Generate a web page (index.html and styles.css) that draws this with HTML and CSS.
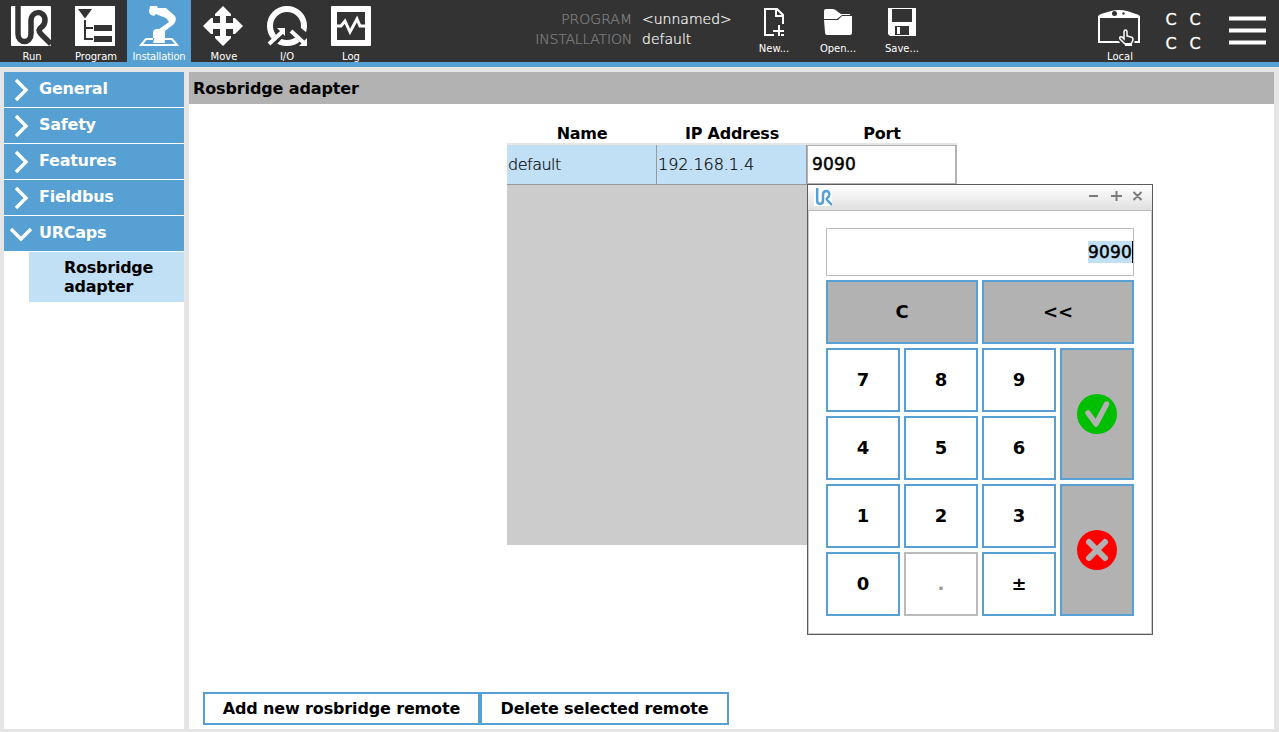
FILE: index.html
```html
<!DOCTYPE html>
<html lang="en">
<head>
<meta charset="utf-8">
<title>Installation</title>
<link rel="stylesheet" href="styles.css">
</head>
<body>
<svg width="0" height="0" class="defs">
  <symbol id="ur" viewBox="0 0 40 40"><path d="M7 0V28C7 38 20 38 20 28V15C20 4 34 4 34 14C34 22 28 21 28 24C28 27 32 30 40 38" fill="none" stroke="currentColor" stroke-width="5.5"/></symbol>
  <symbol id="chev" viewBox="0 0 24 24"><path d="M7 2L17 12L7 22" fill="none" stroke="#fff" stroke-width="3.4"/></symbol>
</svg>
<header class="topbar">
  <nav class="tabs">
    <div class="tab"><svg width="40" height="40"><rect width="40" height="40" rx="1" fill="#fff"/><use href="#ur"/></svg><span>Run</span></div>
    <div class="tab"><svg width="40" height="40"><rect width="40" height="40" fill="#fff"/><path d="M3 3H17L10 12.500Z M19 19H37V25H19Z M19 30H37V36H19Z" fill="#333"/><path d="M10 14V33H18M10 22H18" fill="none" stroke="#333" stroke-width="2"/></svg><span>Program</span></div>
    <div class="tab active"><svg width="40" height="40" fill="#fff"><path d="M11 0L18 0L19 2H27L36 10Q38 14 35 18L26 25V32H14V27Q14 23 18 23L20 23L30 16L27 12L19 9L17 8L15 10Q10 9 10 5Z"/><path d="M14 33H7L2 39H38L33 33H25" fill="none" stroke="#fff" stroke-width="2"/><path d="M16 31H25L26 37H14Z"/></svg><span class="tight">Installation</span></div>
    <div class="tab"><svg width="40" height="40"><path d="M20 0L30 10H23V17H30V10L40 20L30 30V23H23V30H30L20 40L10 30H17V23H10V30L0 20L10 10V17H17V10H10Z" fill="#fff"/><path d="M8 8H12V12H8ZM28 8H32V12H28ZM8 28H12V32H8ZM28 28H32V32H28Z" fill="#333"/></svg><span>Move</span></div>
    <div class="tab"><svg width="40" height="40"><circle cx="20" cy="20" r="17" fill="none" stroke="#fff" stroke-width="6"/><path d="M0 40L17 23L20 25L6 40ZM24 25L40 41V29L28 19Z" fill="#333" stroke="#333" stroke-width="3"/><path d="M2 38L15 26M24 25L37 37" stroke="#fff" stroke-width="4"/><path d="M10 22H18V30ZM40 32V40H32Z" fill="#fff"/></svg><span class="near">I/O</span></div>
    <div class="tab"><svg width="40" height="40"><rect width="40" height="40" rx="1" fill="#fff"/><rect x="6" y="6" width="28" height="28" fill="#333"/><path d="M6 20H10L14 15L19 26L26 13L29 20H34" fill="none" stroke="#fff" stroke-width="3"/></svg><span class="near">Log</span></div>
  </nav>
  <dl class="names"><dt>PROGRAM</dt><dd>&lt;unnamed&gt;</dd><dt class="inst">INSTALLATION</dt><dd>default</dd></dl>
  <div class="files">
    <div class="file"><svg width="28" height="28"><path d="M14 27H5V1H17L23 7V16M16 1V8H23M19 17V28M13 23H24M21 27H24" fill="none" stroke="#fff" stroke-width="2"/></svg><span>New...</span></div>
    <div class="file"><svg width="28" height="28"><path d="M0 11V3Q0 1 2 1H9Q11 1 14 4L17 6H26V7H18L13 11Z M0 12H14L18 8H28V25Q28 27 25 27H3Q1 27 1 24Z" fill="#fff"/></svg><span>Open...</span></div>
    <div class="file"><svg width="28" height="28"><path d="M0 0H28V28H2L0 26Z" fill="#fff"/><path d="M4 1H24V14H4ZM7 18H21V27H7Z" fill="#333"/><path d="M9 19H12V26H9Z" fill="#fff"/></svg><span>Save...</span></div>
  </div>
  <div class="local"><svg width="44" height="40"><path d="M1 6Q1 4 4 3L14 0Q22-2 30 0L39 3Q43 4 43 6V7H1Z" fill="#fff"/><path d="M2 5V31H42V5" fill="none" stroke="#fff" stroke-width="2"/><circle cx="17.500" cy="2.500" r="2.500" fill="#333"/><circle cx="26.500" cy="2.500" r="1.200" fill="#333"/><path d="M28 34L24 29L28 28V21H29V26L35 28V31L34 34Z" fill="#333" stroke="#333" stroke-width="5"/><path d="M28 33L23 28Q22 25 25 26L27 28V21Q27 19 28.500 19Q30 19 30 21V25L34 26Q36 26 36 29L34 33Z" fill="#333" stroke="#fff" stroke-width="1.500"/><path d="M28 32H35V35H28Z" fill="#fff"/></svg><span>Local</span></div>
  <div class="checksum"><span>C</span><span>C</span><span>C</span><span>C</span></div>
  <svg class="menu" width="38" height="30"><path d="M0 2.500H37M0 14.500H37M0 26.500H37" stroke="#fff" stroke-width="3.800"/></svg>
</header>
<div class="body">
  <aside class="side">
    <div class="item"><svg width="24" height="24"><use href="#chev"/></svg>General</div>
    <div class="item"><svg width="24" height="24"><use href="#chev"/></svg>Safety</div>
    <div class="item"><svg width="24" height="24"><use href="#chev"/></svg>Features</div>
    <div class="item"><svg width="24" height="24"><use href="#chev"/></svg>Fieldbus</div>
    <div class="item"><svg width="24" height="24"><use href="#chev" transform="rotate(90 12 12)"/></svg>URCaps</div>
    <div class="sub">Rosbridge adapter</div>
  </aside>
  <main class="main">
    <h1 class="title">Rosbridge adapter</h1>
    <div class="remotes">
      <div class="head"><span>Name</span><span>IP Address</span><span>Port</span></div>
      <div class="row"><span>default</span><span class="ip">192.168.1.4</span><span class="edit">9090</span></div>
      <div class="blank"></div>
    </div>
    <div class="actions"><button class="add">Add new rosbridge remote</button><button class="del">Delete selected remote</button></div>
  </main>
</div>
<section class="pad">
  <div class="bar"><svg class="logo" width="18" height="18"><rect width="18" height="18" fill="#fff"/><use href="#ur" width="18" height="18"/></svg>
    <svg width="56" height="12"><path d="M1 5H10M23 5H34M28.500 0V10M45.500 1L53.500 9M53.500 1L45.500 9" fill="none" stroke="#7c7c7c" stroke-width="2"/></svg></div>
  <div class="keys">
    <div class="field"><span>9090</span></div>
    <button class="wide gray">C</button><button class="wide gray">&lt;&lt;</button>
    <button>7</button><button>8</button><button>9</button>
    <button class="tall gray"><svg width="40" height="40"><circle cx="20" cy="20" r="20" fill="#00be00"/><path d="M11 19L19 30L29.500 10" fill="none" stroke="#b2b2b2" stroke-width="5.500" stroke-linecap="round" stroke-linejoin="round"/></svg></button>
    <button>4</button><button>5</button><button>6</button>
    <button>1</button><button>2</button><button>3</button>
    <button class="tall gray"><svg width="40" height="40"><circle cx="20" cy="20" r="20" fill="#f00"/><path d="M12 12L28 28M28 12L12 28" stroke="#b2b2b2" stroke-width="6" stroke-linecap="round"/></svg></button>
    <button>0</button><button class="off">.</button><button>±</button>
  </div>
</section>
</body>
</html>
```
FILE: styles.css
```css
* { box-sizing: border-box; }
body { margin: 0; width: 1279px; height: 732px; overflow: hidden; background: #e5e5e5; color: #000; font: 16px "DejaVu Sans", sans-serif; display: flex; flex-direction: column; }
svg { display: block; flex: none; overflow: visible; }
.defs { position: absolute; }
.topbar { height: 67px; flex: none; background: #333; border-bottom: 5px solid #56a0d3; color: #fff; display: flex; }
.tabs { display: flex; width: 384px; flex: none; margin-left: -1px; }
.tab { width: 64px; height: 62px; padding-top: 6px; display: flex; flex-direction: column; align-items: center; font-size: 10px; line-height: 12px; gap: 5px; color: #333; }
.tab span { color: #fff; padding-left: 2px; }
.tab.active { background: #56a0d3; }
.tab .tight { letter-spacing: -0.2px; padding-left: 0; }
.tab .near { padding-left: 0; }
.names { margin: 9px 0 0 133px; width: 232px; height: 40px; flex: none; display: grid; grid-template-columns: 116px 1fr; column-gap: 10px; font-size: 14px; font-weight: 200; line-height: 20px; -webkit-text-stroke: 0.2px; }
.names dt { text-align: right; color: #858585; }
.names .inst { letter-spacing: -0.2px; }
.names dd { margin: 0; }
.files { display: flex; margin-left: -6px; }
.file { width: 64px; padding-top: 8px; display: flex; flex-direction: column; align-items: center; font-size: 10px; line-height: 12px; gap: 7px; }
.local { width: 60px; margin-left: 155px; padding-top: 11px; display: flex; flex-direction: column; align-items: center; font-size: 10px; line-height: 12px; }
.local span { padding-left: 2px; }
.checksum { margin: 8px 0 0 10px; width: 48px; height: 48px; display: grid; grid-template-columns: 24px 24px; line-height: 24px; text-align: center; -webkit-text-stroke: 0.3px; }
.menu { margin: 16px 0 0 22px; }
.body { display: flex; flex: 1; padding: 5px 5px 3px 4px; gap: 5px; min-height: 0; }
.side { width: 180px; background: #fff; font-weight: 700; letter-spacing: -0.25px; }
.item { height: 35px; margin-bottom: 1px; background: #56a0d3; color: #fff; display: flex; align-items: center; padding: 0 0 2px 5px; gap: 6px; }
.item svg { position: relative; top: 1px; }
.sub { margin: 1px 0 0 25px; height: 50px; padding: 6px 20px 0 35px; background: #c2e0f5; line-height: 19px; }
.main { flex: 1; background: #fff; display: flex; flex-direction: column; }
.title { margin: 0; height: 32px; padding-left: 4px; background: #b2b2b2; font-size: 16px; font-weight: 700; line-height: 33px; letter-spacing: -0.12px; }
.remotes { width: 450px; margin: 18px 0 0 318px; }
.head { display: grid; grid-template-columns: repeat(3, 150px); height: 23px; line-height: 23px; border-bottom: 2px solid #e5e5e5; text-align: center; font-weight: 700; letter-spacing: -0.25px; }
.row { display: grid; grid-template-columns: repeat(3, 150px); height: 40px; line-height: 39px; font-weight: 200; -webkit-text-stroke: 0.2px; }
.row span { background: #c2e0f5; border: solid #999; border-width: 0 1px 1px 0; padding-left: 1px; letter-spacing: -0.5px; }
.row .ip { letter-spacing: -0.05px; }
.row .edit { background: #fff; border: 1px solid #b2b2b2; border-width: 1px 2px 2px 1px; padding-left: 4px; line-height: 36px; font-size: 17px; font-weight: 400; -webkit-text-stroke: 0.5px; letter-spacing: 0.2px; }
.blank { height: 360px; background: #ccc; }
.actions { display: flex; margin: auto 0 4px 14px; }
button { border: 2px solid #56a0d3; background: #fff; color: #000; font: 700 16px "DejaVu Sans", sans-serif; padding: 0; margin: 0; letter-spacing: -0.15px; }
.actions button { height: 33px; }
.add { width: 277px; }
.del { width: 249px; }
.pad { position: absolute; left: 807px; top: 184px; width: 346px; height: 451px; background: #fff; border: 1px solid #5c5c5c; box-shadow: inset 0 0 0 1px #ccc; }
.bar { height: 26px; border-bottom: 1px solid #bbb; background: linear-gradient(#fff, #e0e0e0); display: flex; align-items: center; justify-content: space-between; padding: 0 8px 1px 6px; color: #56a0d3; }
.keys { padding: 17px 18px 0; display: grid; grid-template-columns: repeat(4, 74px); grid-template-rows: 48px repeat(5, 64px); gap: 4px; }
.field { grid-column: span 4; border: 1px solid #bbb; display: flex; align-items: center; justify-content: flex-end; font-size: 17px; -webkit-text-stroke: 0.5px; letter-spacing: 0.2px; }
.field span { background: #c2e0f5; height: 22px; line-height: 22px; border-right: 1px solid #000; }
.keys button { font-size: 18px; letter-spacing: 0; display: flex; align-items: center; justify-content: center; padding-bottom: 2px; }
.keys .wide { grid-column: span 2; }
.keys .tall { grid-row: span 2; padding: 0; }
.keys .gray { background: #b2b2b2; }
.keys .off { border-color: #bbb; color: #999; }
```
